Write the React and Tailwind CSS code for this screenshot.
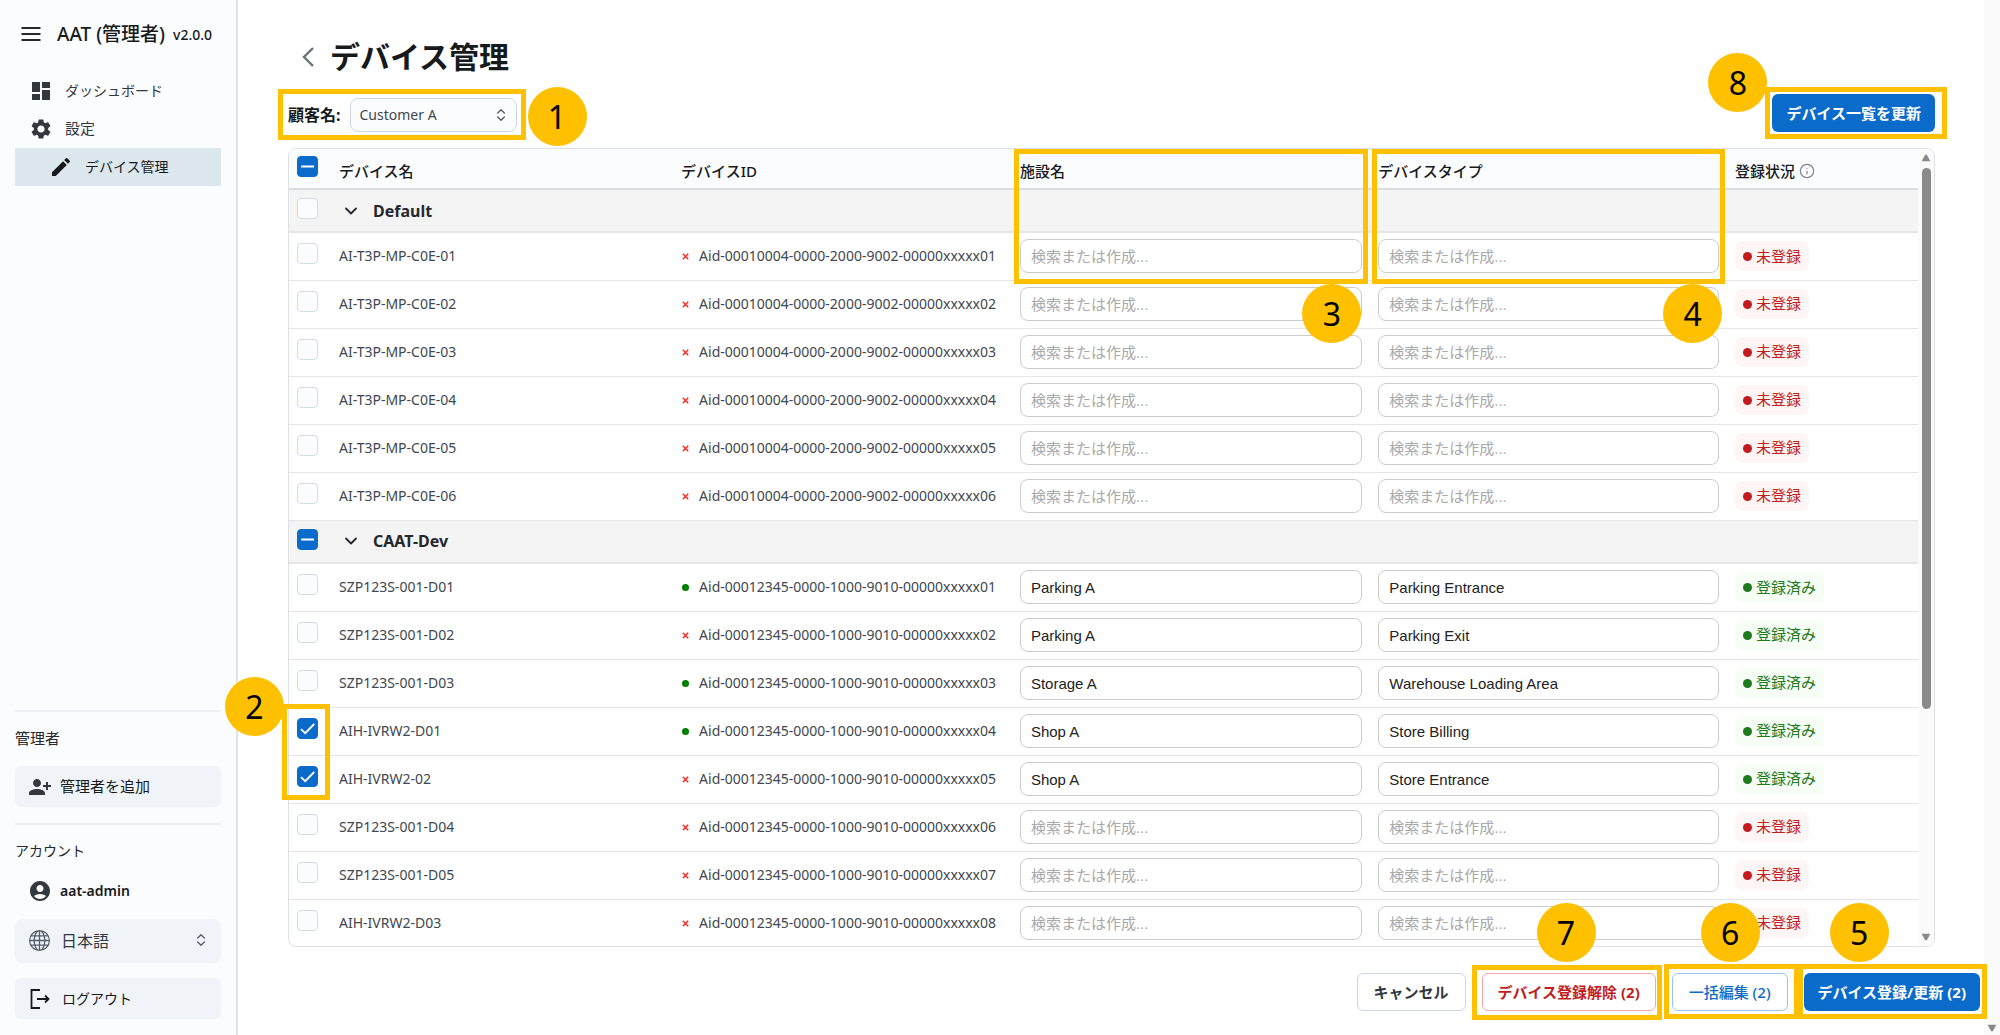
import { useId } from "react";
import { MdDashboard, MdSettings, MdEdit, MdPersonAddAlt1, MdAccountCircle } from "react-icons/md";
import { BsGlobe } from "react-icons/bs";
import { ChevronDown, ChevronsUpDown, Info } from "lucide-react";

const groups = [
  {
    name: "Default",
    state: "off",
    devices: ["01", "02", "03", "04", "05", "06"].map((n) => ({
      name: `AI-T3P-MP-C0E-${n}`,
      id: `Aid-00010004-0000-2000-9002-00000xxxxx${n}`,
    })),
  },
  {
    name: "CAAT-Dev",
    state: "mixed",
    devices: [
      { name: "SZP123S-001-D01", n: "01", online: true, facility: "Parking A", type: "Parking Entrance" },
      { name: "SZP123S-001-D02", n: "02", facility: "Parking A", type: "Parking Exit" },
      { name: "SZP123S-001-D03", n: "03", online: true, facility: "Storage A", type: "Warehouse Loading Area" },
      { name: "AIH-IVRW2-D01", n: "04", online: true, facility: "Shop A", type: "Store Billing", checked: true },
      { name: "AIH-IVRW2-02", n: "05", facility: "Shop A", type: "Store Entrance", checked: true },
      { name: "SZP123S-001-D04", n: "06" },
      { name: "SZP123S-001-D05", n: "07" },
      { name: "AIH-IVRW2-D03", n: "08" },
    ].map((d) => ({ ...d, id: `Aid-00012345-0000-1000-9010-00000xxxxx${d.n}` })),
  },
];

function Badge({ children, className }) {
  return (
    <span className={`absolute z-20 flex size-[59px] items-center justify-center rounded-full bg-[#ffc000] text-[32px] leading-none font-normal text-black ${className}`}>
      {children}
    </span>
  );
}

function Frame({ className }) {
  return <span aria-hidden="true" className={`pointer-events-none absolute z-10 border-5 border-[#ffc000] ${className}`} />;
}

function Check({ state, label }) {
  const on = state !== "off";
  return (
    <span className="relative block size-[21px]">
      <input
        type="checkbox"
        aria-label={label}
        defaultChecked={state === "on"}
        ref={(el) => {
          if (el) el.indeterminate = state === "mixed";
        }}
        className={`block size-full appearance-none rounded border ${on ? "border-[#0b6bcb] bg-[#0b6bcb]" : "border-[#d3dce8] bg-[#fbfcfe]"}`}
      />
      {on && (
        <svg viewBox="0 0 21 21" className="pointer-events-none absolute inset-0 size-full" fill="none" stroke="#fff">
          {state === "on" ? <path d="M4 11.2 8.2 15.2 17.2 6" strokeWidth="1.8" /> : <path d="M4.2 10.5H17" strokeWidth="2" />}
        </svg>
      )}
    </span>
  );
}

function ComboInput({ value, label }) {
  return (
    <input
      type="text"
      aria-label={label}
      defaultValue={value}
      placeholder="検索または作成..."
      className="block h-[34px] w-full rounded-lg border border-[#ccc] bg-white px-[10px] font-['Liberation_Sans','Noto_Sans_CJK_JP',sans-serif] text-[15px] text-[#222] placeholder:text-[#a9a9a9]"
    />
  );
}

function Status({ done }) {
  return (
    <span className={`inline-flex h-[30px] items-center gap-1 rounded-lg px-2 text-[15px] ${done ? "bg-[#f6fef6] text-[#1f7a1f]" : "bg-[#fef6f6] text-[#c41c1c]"}`}>
      <span className={`size-[9px] rounded-full ${done ? "bg-[#1f7a1f]" : "bg-[#c41c1c]"}`} />
      {done ? "登録済み" : "未登録"}
    </span>
  );
}

function DeviceRow({ d }) {
  return (
    <tr className="h-12 border-b border-[#e3e5e8]">
      <td className="pt-[10px] pl-2 align-top">
        <Check state={d.checked ? "on" : "off"} label={d.name} />
      </td>
      <td>{d.name}</td>
      <td>
        <span className="flex items-center">
          <span className="flex w-[18px] items-center">
            {d.online ? (
              <span className="ml-px size-[7px] rounded-full bg-[#008000]" />
            ) : (
              <svg viewBox="0 0 7 7" className="ml-px size-[7px]" stroke="#ff2b2b" strokeWidth="1.5">
                <path d="M.8.8 6.2 6.2M6.2.8.8 6.2" />
              </svg>
            )}
          </span>
          {d.id}
        </span>
      </td>
      <td className="pr-4">
        <ComboInput value={d.facility} label={`${d.name} 施設名`} />
      </td>
      <td className="pr-4">
        <ComboInput value={d.type} label={`${d.name} デバイスタイプ`} />
      </td>
      <td>
        <Status done={!!d.facility} />
      </td>
    </tr>
  );
}

function DeviceTable() {
  return (
    <table className="w-full table-fixed border-collapse text-left text-sm text-[#40474e]">
      <colgroup>
        <col className="w-[50px]" />
        <col className="w-[21%]" />
        <col className="w-[20.8%]" />
        <col className="w-[22%]" />
        <col className="w-[21.9%]" />
        <col />
      </colgroup>
      <thead className="text-[15px] text-[#171a1c]">
        <tr className="h-10 border-b-2 border-[#dcdee0] bg-[#fbfcfe]">
          <th className="pt-[7px] pl-2 align-top">
            <Check state="mixed" label="すべて選択" />
          </th>
          <th className="pt-[6px] font-medium">デバイス名</th>
          <th className="pt-[6px] font-medium">デバイスID</th>
          <th className="relative pt-[6px] font-medium">
            施設名
            <Frame className="top-0 right-[10px] -left-[6px] h-[135px]" />
            <Badge className="top-[135px] right-[17px]">3</Badge>
          </th>
          <th className="relative pt-[6px] font-medium">
            デバイスタイプ
            <Frame className="top-0 right-[10px] -left-[6px] h-[135px]" />
            <Badge className="top-[135px] right-[13px]">4</Badge>
          </th>
          <th className="pt-[6px] font-medium">
            <span className="flex items-center gap-1">
              登録状況
              <Info className="size-4 text-[#80868b]" strokeWidth={1.8} />
            </span>
          </th>
        </tr>
      </thead>
      {groups.map((g) => (
        <tbody key={g.name}>
          <tr className="h-[43px] border-b-2 border-[#e6e6e6] bg-[#f4f4f4]">
            <td className="pt-2 pl-2 align-top">
              <Check state={g.state} label={g.name} />
            </td>
            <th colSpan={5} className="font-bold text-[#25292d]">
              <button type="button" className="flex items-center gap-3 pl-[2px] text-base">
                <ChevronDown className="size-5" strokeWidth={2.2} />
                {g.name}
              </button>
            </th>
          </tr>
          {g.devices.map((d) => (
            <DeviceRow key={d.id} d={d} />
          ))}
        </tbody>
      ))}
    </table>
  );
}

function Arrow({ down }) {
  return (
    <svg viewBox="0 0 10 8" className="h-2 w-[10px]" fill="#8a8a8a">
      <path d={down ? "M.6.8h8.8L5.8 7.2H4.2z" : "M.6 7.2h8.8L5.8.8H4.2z"} />
    </svg>
  );
}

function Sidebar() {
  return (
    <aside className="flex w-[238px] shrink-0 flex-col border-r-2 border-[#dfe3e8] bg-[#fbfcfe] px-[15px] text-[15px] text-[#32383e]">
      <div className="flex h-[68px] items-center text-[#171a1c]">
        <button type="button" aria-label="メニュー" className="mr-4 ml-[6px]">
          <svg viewBox="0 0 20 20" className="size-5" stroke="#25292d" strokeWidth="2">
            <path d="M.5 4H19.5M.5 10H19.5M.5 16H19.5" />
          </svg>
        </button>
        <span className="text-[19px] font-medium whitespace-nowrap">AAT (管理者)</span>
        <span className="ml-2 pt-px text-sm font-medium">v2.0.0</span>
      </div>
      <nav className="mt-1 text-sm">
        <a href="#dashboard" className="flex h-[38px] items-center gap-3 pl-[14px]">
          <MdDashboard className="size-6" />
          ダッシュボード
        </a>
        <a href="#settings" className="flex h-[38px] items-center gap-3 pl-[14px] text-[15px]">
          <MdSettings className="size-6" />
          設定
        </a>
        <a href="#devices" aria-current="page" className="flex h-[38px] items-center gap-3 bg-[#dde7ee] pl-[34px] text-[#171a1c]">
          <MdEdit className="size-6" />
          デバイス管理
        </a>
      </nav>
      <div className="mt-auto mb-4 flex flex-col">
        <div className="border-t-2 border-[#eceff3] pt-[14px]">
          <h2 className="leading-6 text-[#25292d]">管理者</h2>
          <button type="button" className="mt-4 flex h-[41px] w-full items-center gap-2 rounded-md bg-[#f0f4f8] pl-[13px] text-[#171a1c]">
            <MdPersonAddAlt1 className="size-6 text-[#32383e]" />
            管理者を追加
          </button>
        </div>
        <div className="mt-4 border-t-2 border-[#eceff3] pt-[14px]">
          <h2 className="text-sm leading-6 text-[#25292d]">アカウント</h2>
          <div className="mt-4 flex h-6 items-center gap-2 pl-[13px] text-sm font-semibold text-[#171a1c]">
            <MdAccountCircle className="size-6 text-[#32383e]" />
            aat-admin
          </div>
          <div className="relative mt-4">
            <select aria-label="言語" defaultValue="ja" className="h-[43px] w-full appearance-none rounded-lg bg-[#f0f4f8] pl-[46px] text-base shadow-xs">
              <option value="ja">日本語</option>
              <option value="en">English</option>
            </select>
            <BsGlobe className="pointer-events-none absolute top-[11px] left-[14px] size-[21px] text-[#555e68]" />
            <ChevronsUpDown className="pointer-events-none absolute top-[13px] right-3 size-4 text-[#555e68]" />
          </div>
          <button type="button" className="mt-4 flex h-[41px] w-full items-center gap-3 rounded-md bg-[#f0f4f8] pl-[15px] text-sm text-[#171a1c]">
            <svg viewBox="0 0 20 20" className="size-5" fill="none" stroke="currentColor" strokeWidth="1.8">
              <path d="M10 1H1.5V19H10M7 10H18.5M15 6.5 18.5 10 15 13.5" />
            </svg>
            ログアウト
          </button>
        </div>
      </div>
    </aside>
  );
}

export default function App() {
  const customerId = useId();
  return (
    <div className="flex h-screen overflow-hidden bg-white font-['Noto_Sans','Noto_Sans_CJK_JP',sans-serif]">
      <Sidebar />
      <main className="flex min-w-0 flex-1 flex-col pl-[50px]">
        <div className="flex min-h-0 flex-1 flex-col pr-[49px]">
          <header className="mt-8 flex h-[50px] items-center gap-4 text-[#171a1c]">
            <a href="#back" aria-label="戻る" className="pl-[14px] text-[#6b7177]">
              <svg viewBox="0 0 12 20" className="h-5 w-3" fill="none" stroke="currentColor" strokeWidth="2.4">
                <path d="M11 1 2 10l9 9" />
              </svg>
            </a>
            <h1 className="text-[30px] leading-none font-bold">デバイス管理</h1>
          </header>
          <div className="mt-2 mb-2 flex h-[50px] items-center justify-between">
            <div className="relative flex items-center gap-[9px]">
              <label htmlFor={customerId} className="text-base font-bold text-[#171a1c]">
                顧客名:
              </label>
              <div className="relative">
                <select id={customerId} className="h-[34px] w-[167px] appearance-none rounded-lg border border-[#cdd7e1] bg-[#fbfcfe] pl-[9px] text-sm text-[#40474e]">
                  <option>Customer A</option>
                </select>
                <ChevronsUpDown className="pointer-events-none absolute top-[9px] right-2 size-4 text-[#555e68]" />
              </div>
              <Frame className="-top-[9px] -right-[9px] -bottom-[8px] -left-[10px]" />
              <Badge className="-top-[11px] -right-[70px]">1</Badge>
            </div>
            <div className="relative mb-1">
              <button type="button" className="h-[38px] rounded-md bg-[#0b6bcb] px-[14px] text-[15px] font-bold text-white">
                デバイス一覧を更新
              </button>
              <Frame className="-top-[7px] -right-[12px] -bottom-[7px] -left-[7px]" />
              <Badge className="-top-[41px] -left-[64px]">8</Badge>
            </div>
          </div>
          <div className="relative min-h-0 flex-1">
            <div className="flex h-full overflow-hidden rounded-lg border border-[#dde1e5]">
              <div className="min-w-0 flex-1">
                <DeviceTable />
              </div>
              <div aria-hidden="true" className="flex w-4 flex-col items-center bg-[#fbfbfb] py-[5px]">
                <Arrow />
                <div className="mt-[6px] h-[541px] w-[9px] rounded-full bg-[#8a8a8a]" />
                <div className="mt-auto">
                  <Arrow down />
                </div>
              </div>
            </div>
            <Frame className="top-[556px] -left-[6px] h-24 w-12" />
            <Badge className="top-[529px] -left-[63px]">2</Badge>
          </div>
        </div>
        <footer className="mt-[26px] mb-6 flex h-[38px] justify-end gap-4 pr-1 text-[15px] font-bold">
          <button type="button" className="rounded-md border border-[#cdd7e1] px-4 text-[#32383e]">
            キャンセル
          </button>
          <div className="relative">
            <button type="button" className="h-full rounded-md border border-[#f7a5a5] px-[15px] text-[#c41c1c]">
              デバイス登録解除 (2)
            </button>
            <Frame className="-top-[8px] -right-[6px] -bottom-[9px] -left-[10px]" />
            <Badge className="-top-[70px] left-[55px]">7</Badge>
          </div>
          <div className="relative">
            <button type="button" className="h-full rounded-md border border-[#97c3f0] px-4 font-medium text-[#0b6bcb]">
              一括編集 (2)
            </button>
            <Frame className="-top-[9px] -right-[11px] -bottom-[8px] -left-[8px]" />
            <Badge className="-top-[70px] left-[29px]">6</Badge>
          </div>
          <div className="relative">
            <button type="button" className="h-full rounded-md bg-[#0b6bcb] px-[14px] text-white">
              デバイス登録/更新 (2)
            </button>
            <Frame className="-top-[9px] -right-[7px] -bottom-[8px] -left-[6px]" />
            <Badge className="-top-[70px] left-[26px]">5</Badge>
          </div>
        </footer>
      </main>
      <div aria-hidden="true" className="flex w-4 shrink-0 flex-col items-center justify-end bg-[#fbfbfb] pb-[3px]">
        <Arrow down />
      </div>
    </div>
  );
}
